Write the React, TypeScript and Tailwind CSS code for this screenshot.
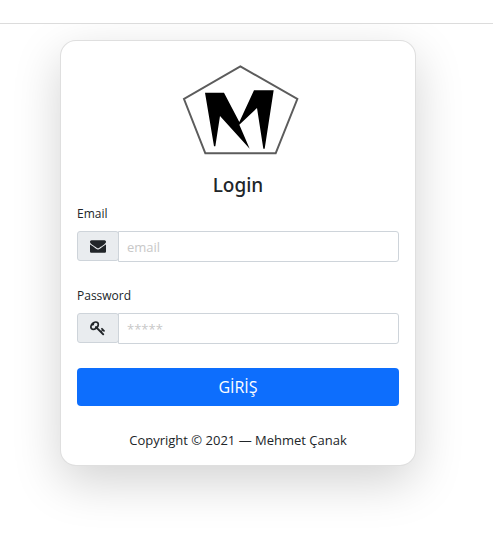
import type { ReactNode } from "react";

function Logo() {
  return (
    <svg viewBox="21 31 366 276" className="mx-auto h-[92px] w-[122px]" role="img" aria-label="Logo">
      <path d="M211 35 L382 133 L317 296 H106 L42 133 Z" fill="none" stroke="#5c5c5c" strokeWidth="6" />
      <path
        d="M105 114 H162 L208 202 L252 107 H311 L284 282 H280 L261 160 L208 210 L239 282 L150 184 L136 275 H132 Z"
        fill="#000"
      />
    </svg>
  );
}

function EnvelopeIcon() {
  return (
    <svg viewBox="0 0 1792 1792" className="size-4" fill="currentColor" aria-hidden="true">
      <path d="M1792 710v794q0 66-47 113t-113 47h-1472q-66 0-113-47t-47-113v-794q44 49 101 87 362 246 497 345 57 42 92.5 65.5t94.5 48 110 24.5h2q51 0 110-24.5t94.5-48 92.5-65.5q170-123 498-345 57-39 100-87zm0-294q0 79-49 151t-122 123q-376 261-468 325-10 7-42.5 31t-54 38.5-52 32.5-57.5 27-50 9h-2q-23 0-50-9t-57.5-27-52-32.5-54-38.5-42.5-31q-91-64-262-182.5t-205-142.5q-62-42-117-115.5t-55-136.5q0-78 41.5-130t118.5-52h1472q65 0 112.5 47t47.5 113z" />
    </svg>
  );
}

function KeyIcon() {
  return (
    <svg viewBox="0 0 1792 1792" className="size-4" fill="currentColor" aria-hidden="true">
      <path d="M832 512q0-80-56-136t-136-56-136 56-56 136q0 42 19 83-41-19-83-19-80 0-136 56t-56 136 56 136 136 56 136-56 56-136q0-42-19-83 41 19 83 19 80 0 136-56t56-136zm851 704q0 17-49 66t-66 49q-9 0-28.5-16t-36.5-33-38.5-40-24.5-26l-96 96 220 220q28 28 28 68 0 42-39 81t-81 39q-40 0-68-28l-671-671q-176 131-365 131-163 0-265.5-102.5t-102.5-265.5q0-160 95-313t248-248 313-95q163 0 265.5 102.5t102.5 265.5q0 189-131 365l355 355 96-96q-3-3-26-24.5t-40-38.5-33-36.5-16-28.5q0-17 49-66t66-49q13 0 23 10 6 6 46 44.5t82 79.5 86.5 86 73 78 28.5 41z" />
    </svg>
  );
}

type FieldProps = {
  id: string;
  label: string;
  type: string;
  placeholder: string;
  icon: ReactNode;
};

function Field({ id, label, type, placeholder, icon }: FieldProps) {
  return (
    <div className="mb-6">
      <label htmlFor={id} className="mb-[7px] block text-[12px] leading-5">
        {label}
      </label>
      <div className="flex items-start">
        <span className="flex h-[30px] w-[42px] shrink-0 items-center justify-center rounded-[3px] border border-[#ced4da] bg-[#e9ecef]">
          {icon}
        </span>
        <input
          id={id}
          type={type}
          placeholder={placeholder}
          className="-ml-px h-[31px] min-w-0 flex-1 rounded-r-[3px] border border-[#ced4da] bg-white px-2 text-[13px] outline-none placeholder:text-[#c8c8c8] focus:border-[#86b7fe]"
        />
      </div>
    </div>
  );
}

export default function App() {
  return (
    <div className="min-h-screen bg-white font-['Open_Sans','Noto_Sans',sans-serif] text-[#212529]">
      <header className="relative z-10 h-6 border-b border-[#dcdcdc] bg-white" />
      <main className="flex justify-center pt-4 pr-[77px] pb-20 pl-[60px]">
        <form
          className="w-full max-w-[400px] rounded-2xl border border-black/[.125] bg-white px-4 pt-6 pb-[15px] shadow-[0_16px_48px_rgba(0,0,0,0.175)]"
          onSubmit={(event) => event.preventDefault()}
        >
          <Logo />
          <h1 className="mt-4 mb-[7px] text-center font-['Noto_Sans','Open_Sans',sans-serif] text-[19px] leading-6 font-medium">
            Login
          </h1>
          <Field id="email" label="Email" type="email" placeholder="email" icon={<EnvelopeIcon />} />
          <Field id="password" label="Password" type="password" placeholder="*****" icon={<KeyIcon />} />
          <button
            type="submit"
            className="h-[38px] w-full rounded-[4px] bg-[#0d6efd] text-base text-white hover:bg-[#0b5ed7]"
          >
            GİRİŞ
          </button>
          <p className="mt-6 text-center text-[13px] leading-5">Copyright © 2021 — Mehmet Çanak</p>
        </form>
      </main>
    </div>
  );
}
